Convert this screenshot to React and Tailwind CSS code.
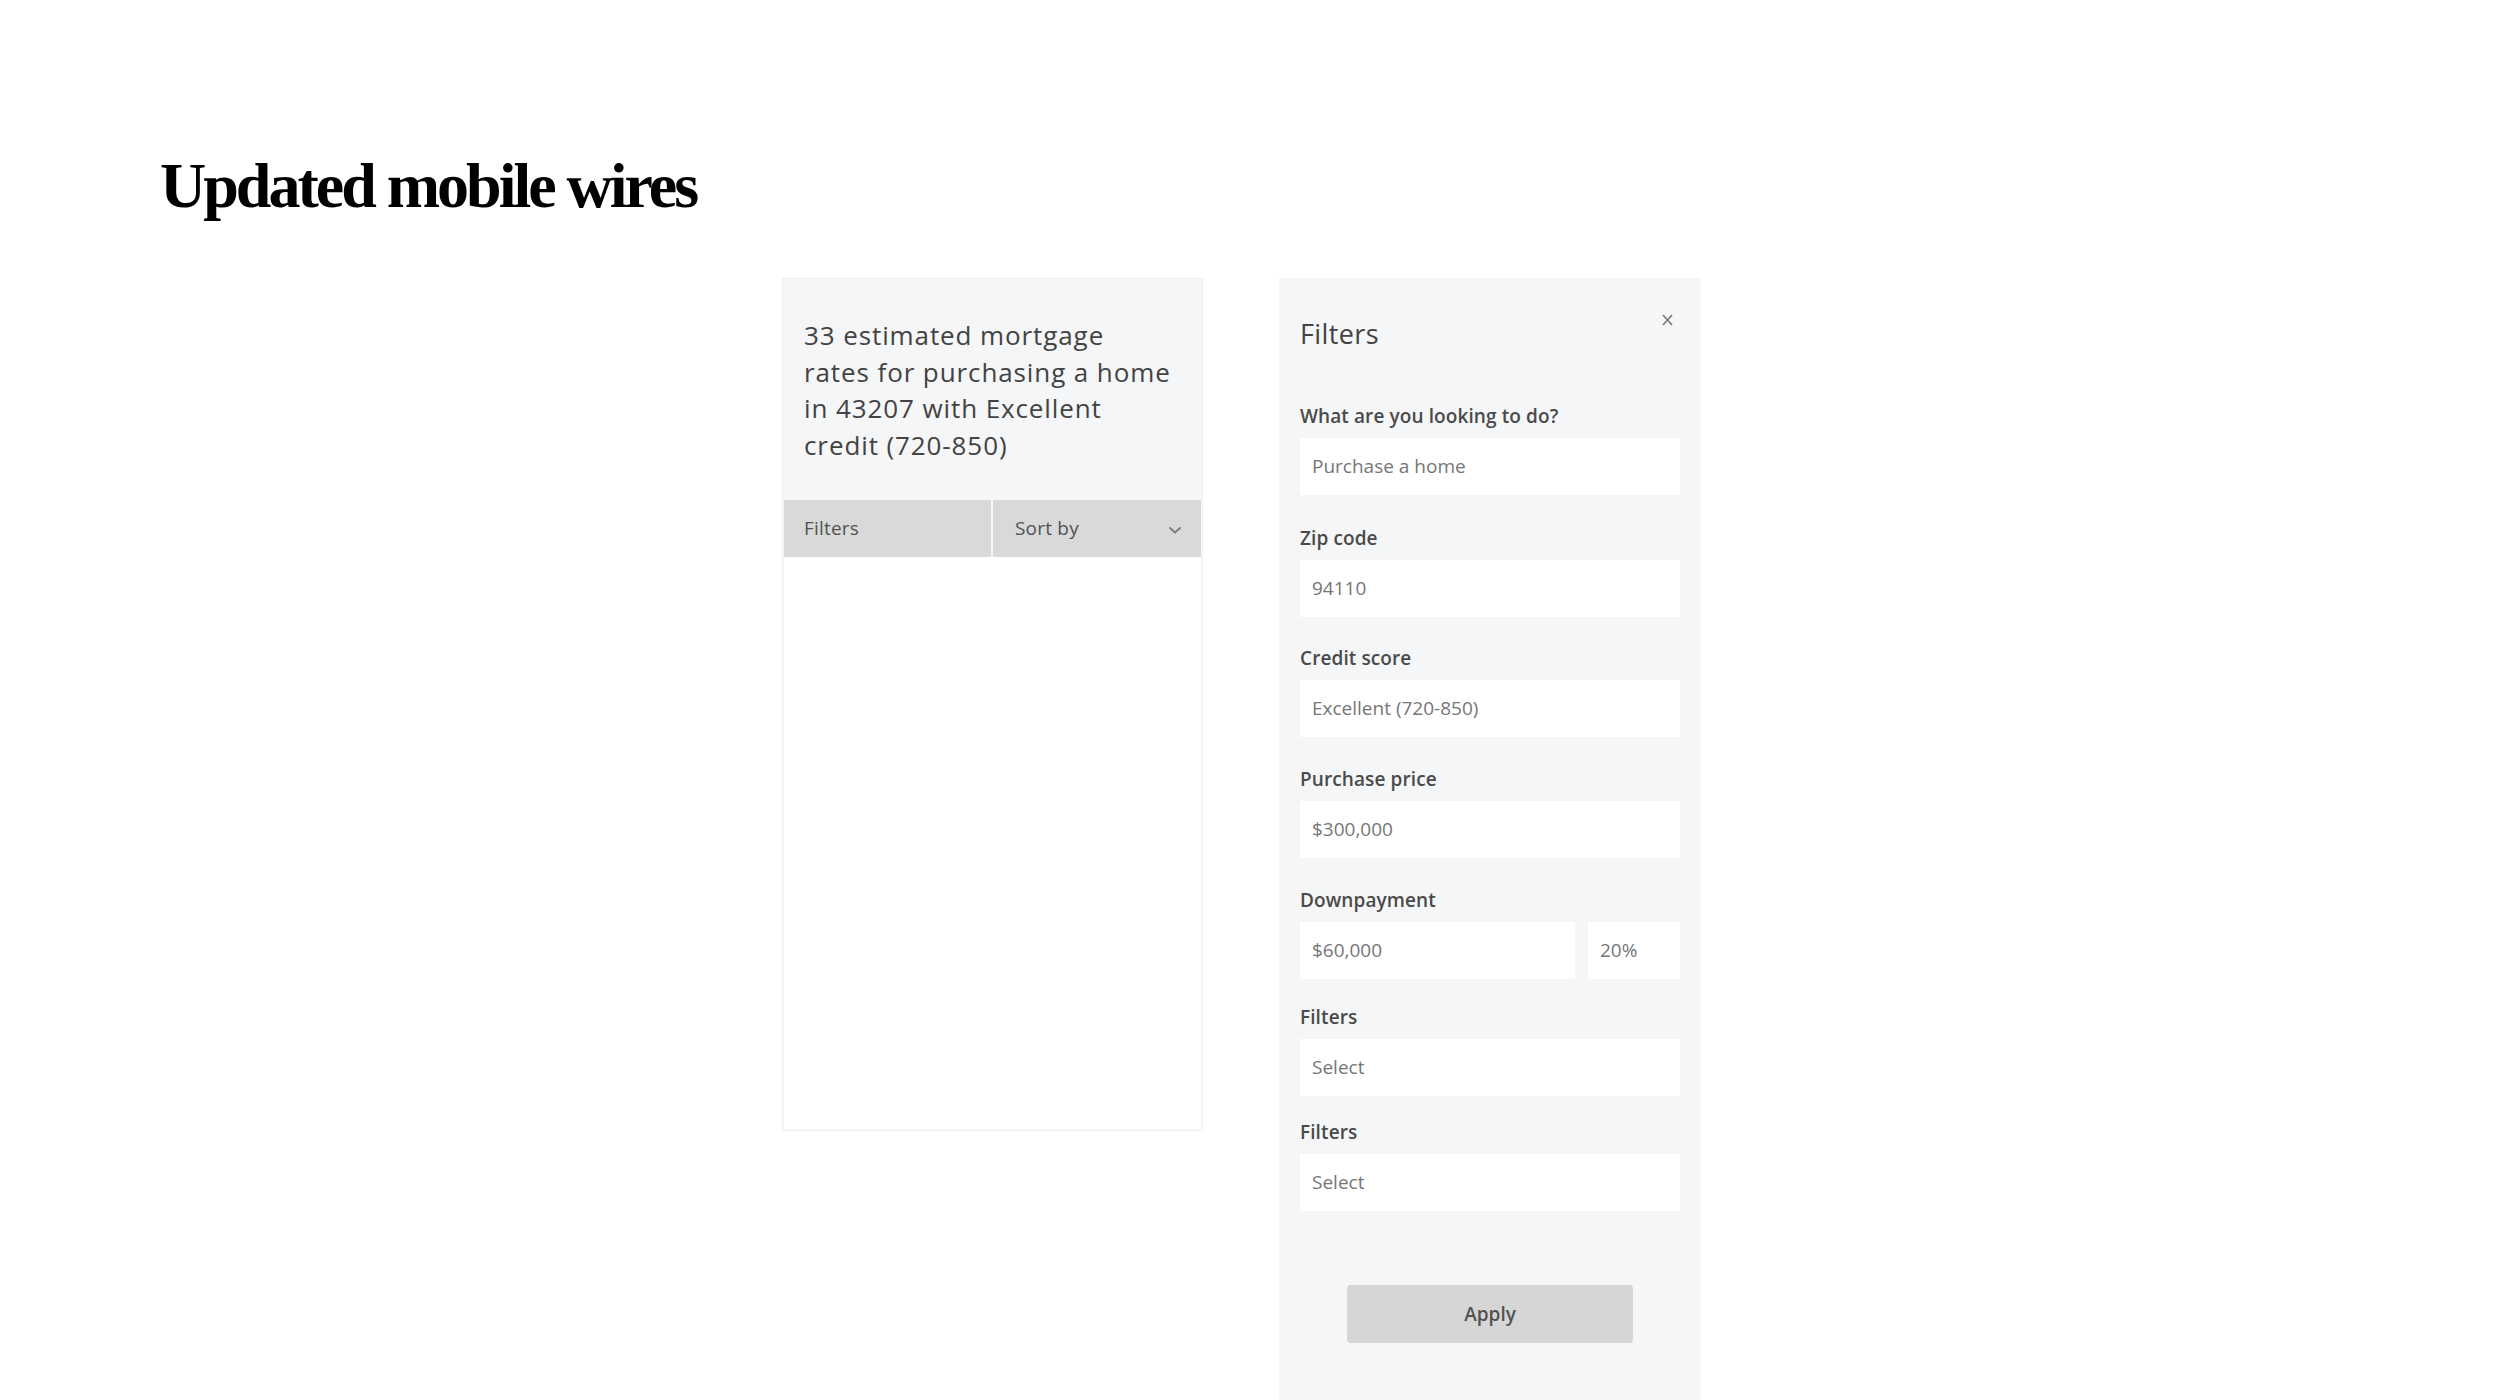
import React from "react";

function Field({ label, className = "", children }) {
  return (
    <div className={className}>
      <div className="text-[19px] leading-[24px] font-semibold tracking-[0.1px] text-[#4a4a4a] mb-[10px]">
        {label}
      </div>
      {children}
    </div>
  );
}

function Input({ value, className = "" }) {
  return (
    <div
      className={`h-[57px] bg-white px-[12px] flex items-center text-[19px] text-[#767676] ${className}`}
    >
      {value}
    </div>
  );
}

export default function App() {
  return (
    <div className="h-[1400px] overflow-hidden bg-white px-[160px] pt-[154px] font-['Open_Sans',sans-serif]">
      {/* Title */}
      <h1 className="font-['Liberation_Serif',serif] font-bold text-[64px] leading-[64px] tracking-[-3px] text-black">
        Updated mobile wires
      </h1>

      <div className="flex items-start mt-[60px] ml-[622px]">
        {/* Results panel */}
        <div className="w-[421px] h-[853px] bg-[#f5f6f7] border border-[#eff1f1] p-[1px] flex flex-col">
          <div className="px-[20px] pt-[37px] pb-[36px] text-[26px] leading-[36.7px] font-medium tracking-[0.9px] text-[#434343]">
            33 estimated mortgage
            <br />
            rates for purchasing a home
            <br />
            in 43207 with Excellent
            <br />
            credit (720-850)
          </div>
          <div className="flex gap-[2px] h-[57px] text-[19px] font-medium tracking-[0.2px] text-[#525252]">
            <div className="flex-1 bg-[#d9d9d9] flex items-center px-[20px]">
              Filters
            </div>
            <div className="flex-1 bg-[#d9d9d9] flex items-center justify-between pl-[22px] pr-[19px]">
              <span>Sort by</span>
              <svg width="14" height="8" viewBox="0 0 14 8" className="mt-[3px]">
                <polyline
                  points="1.5,1.5 7,6.5 12.5,1.5"
                  fill="none"
                  stroke="#7a7a7a"
                  strokeWidth="1.8"
                />
              </svg>
            </div>
          </div>
          <div className="flex-1 bg-white" />
        </div>

        {/* Filters panel */}
        <div className="w-[422px] h-[1122px] ml-[76px] bg-[#f5f6f7] px-[21px] pt-[40px]">
          <div className="flex items-start justify-between">
            <h2 className="text-[27px] leading-[32px] font-medium tracking-[0.4px] text-[#434343]">
              Filters
            </h2>
            <svg width="11" height="12" viewBox="0 0 11 12" className="mt-[-4px] mr-[7px]">
              <path d="M1 1 L10 11 M10 1 L1 11" stroke="#777" strokeWidth="1.6" fill="none" />
            </svg>
          </div>

          <Field label="What are you looking to do?" className="mt-[54px]">
            <Input value="Purchase a home" />
          </Field>
          <Field label="Zip code" className="mt-[31px]">
            <Input value="94110" />
          </Field>
          <Field label="Credit score" className="mt-[29px]">
            <Input value="Excellent (720-850)" />
          </Field>
          <Field label="Purchase price" className="mt-[30px]">
            <Input value="$300,000" />
          </Field>
          <Field label="Downpayment" className="mt-[30px]">
            <div className="flex gap-[13px]">
              <Input value="$60,000" className="flex-1" />
              <Input value="20%" className="w-[92px] px-[11px]" />
            </div>
          </Field>
          <Field label="Filters" className="mt-[26px]">
            <Input value="Select" />
          </Field>
          <Field label="Filters" className="mt-[24px]">
            <Input value="Select" />
          </Field>

          <button className="block mx-auto mt-[74px] w-[286px] h-[58px] rounded-[4px] bg-[#d6d6d6] text-[19px] font-semibold text-[#525252]">
            Apply
          </button>
        </div>
      </div>
    </div>
  );
}
